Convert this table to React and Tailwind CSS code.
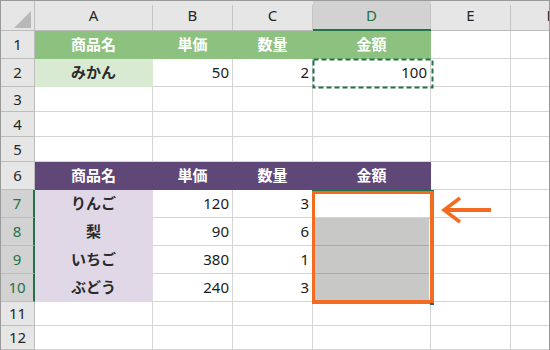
import React from "react";

const EMPTY = "bg-white border-r border-b border-[#d4d4d4]";
const GREEN_HEAD = "bg-[#8cc180] border-r border-b border-[#8cc180] justify-center text-white font-bold text-[15px]";
const PURPLE_HEAD = "bg-[#5f4777] border-r border-b border-[#5f4777] justify-center text-white font-bold text-[15px]";
const LAVENDER = "bg-[#e0d8e6] border-r border-b border-[#e0d8e6] justify-center font-bold text-[15px] text-[#2b2b2b]";
const NUM = "bg-white border-r border-b border-[#d4d4d4] justify-end pr-[3px] text-[15px] text-[#1a1a1a]";
const GRAY = "bg-[#c8c9c6] border-r border-b border-r-[#c8c9c6] border-b-[#a8a8a8]";

const rows = [
  {
    n: "1", h: "h-[28px]",
    cells: [
      [GREEN_HEAD, "商品名"], [GREEN_HEAD, "単価"], [GREEN_HEAD, "数量"], [GREEN_HEAD, "金額"], [EMPTY, ""], [EMPTY, ""],
    ],
  },
  {
    n: "2", h: "h-[28px]",
    cells: [
      ["bg-[#d9ead3] border-r border-b border-[#d9ead3] justify-center font-bold text-[15px] text-[#2b2b2b]", "みかん"],
      [NUM, "50"], [NUM, "2"], [NUM, "100"], [EMPTY, ""], [EMPTY, ""],
    ],
  },
  { n: "3", h: "h-[25px]", cells: [[EMPTY, ""], [EMPTY, ""], [EMPTY, ""], [EMPTY, ""], [EMPTY, ""], [EMPTY, ""]] },
  { n: "4", h: "h-[25px]", cells: [[EMPTY, ""], [EMPTY, ""], [EMPTY, ""], [EMPTY, ""], [EMPTY, ""], [EMPTY, ""]] },
  { n: "5", h: "h-[25px]", cells: [[EMPTY, ""], [EMPTY, ""], [EMPTY, ""], [EMPTY, ""], [EMPTY, ""], [EMPTY, ""]] },
  {
    n: "6", h: "h-[28px]",
    cells: [
      [PURPLE_HEAD, "商品名"], [PURPLE_HEAD, "単価"], [PURPLE_HEAD, "数量"], [PURPLE_HEAD, "金額"], [EMPTY, ""], [EMPTY, ""],
    ],
  },
  {
    n: "7", h: "h-[28px]", sel: true,
    cells: [[LAVENDER, "りんご"], [NUM, "120"], [NUM, "3"], [EMPTY, ""], [EMPTY, ""], [EMPTY, ""]],
  },
  {
    n: "8", h: "h-[28px]", sel: true,
    cells: [[LAVENDER, "梨"], [NUM, "90"], [NUM, "6"], [GRAY, ""], [EMPTY, ""], [EMPTY, ""]],
  },
  {
    n: "9", h: "h-[28px]", sel: true,
    cells: [[LAVENDER, "いちご"], [NUM, "380"], [NUM, "1"], [GRAY, ""], [EMPTY, ""], [EMPTY, ""]],
  },
  {
    n: "10", h: "h-[28px]", sel: true,
    cells: [[LAVENDER, "ぶどう"], [NUM, "240"], [NUM, "3"], [GRAY, ""], [EMPTY, ""], [EMPTY, ""]],
  },
  { n: "11", h: "h-[24px]", cells: [[EMPTY, ""], [EMPTY, ""], [EMPTY, ""], [EMPTY, ""], [EMPTY, ""], [EMPTY, ""]] },
  { n: "12", h: "h-[24px]", cells: [[EMPTY, ""], [EMPTY, ""], [EMPTY, ""], [EMPTY, ""], [EMPTY, ""], [EMPTY, ""]] },
];

const letters = ["A", "B", "C", "D", "E", "F"];

function ColHeader({ label, active }) {
  return (
    <div
      className={
        active
          ? "flex h-full bg-[#d2d2d2] border-b-2 border-[#217346]"
          : "flex h-full bg-[#e6e6e6] border-b border-[#bdbdbd]"
      }
    >
      <div
        className={
          active
            ? "flex-1 flex items-center justify-center text-[15px] text-[#217346]"
            : "flex-1 flex items-center justify-center text-[15px] text-[#262626]"
        }
      >
        {label}
      </div>
      <div className="w-px self-end h-[25px] bg-[#c4c4c4]" />
    </div>
  );
}

function RowHeader({ n, sel }) {
  return (
    <div
      className={
        sel
          ? "flex items-center justify-center bg-[#d2d2d2] border-r-2 border-r-[#217346] border-b border-b-[#bdbdbd] text-[15px] text-[#217346]"
          : "flex items-center justify-center bg-[#e6e6e6] border-r border-b border-[#bdbdbd] text-[15px] text-[#262626]"
      }
    >
      {n}
    </div>
  );
}

export default function App() {
  return (
    <div className="relative w-[550px] h-[350px] overflow-hidden bg-white border-t border-l border-r border-[#9a9a9a] font-['Noto_Sans','Noto_Sans_CJK_JP',sans-serif] leading-none">
      <div className="w-[548px] overflow-hidden">
        <div className="grid w-[590px] grid-cols-[34px_118px_80px_80px_118px_80px_80px]">
          {/* column header strip */}
          <div className="h-[30px] flex bg-[#e6e6e6] border-r border-b border-[#bdbdbd] items-end justify-end pr-[2px] pb-[2px]">
            <svg width="18" height="17" viewBox="0 0 18 17">
              <polygon points="17,0 17,17 0,17" fill="#b8b8b8" />
            </svg>
          </div>
          {letters.map((l) => (
            <div key={l} className="h-[30px]">
              <ColHeader label={l} active={l === "D"} />
            </div>
          ))}

          {rows.map((r) => (
            <React.Fragment key={r.n}>
              <div className={`${r.h} grid`}>
                <RowHeader n={r.n} sel={r.sel} />
              </div>
              {r.cells.map(([cls, txt], i) => (
                <div key={i} className={`${r.h} flex items-center ${cls}`}>
                  {txt}
                </div>
              ))}
            </React.Fragment>
          ))}
        </div>
      </div>

      {/* copy marquee around D2 */}
      <svg className="absolute left-[311px] top-[57px]" width="122" height="31" viewBox="0 0 122 31">
        <rect x="1.5" y="1.5" width="119" height="28" fill="none" stroke="#217346" strokeWidth="2" strokeDasharray="5 3" />
      </svg>

      {/* selection outline over D7:D10 */}
      <div className="absolute left-[311px] top-[189px] w-[122px] h-px bg-[#217346]" />
      <div className="absolute left-[428px] top-[218px] w-px h-[81px] bg-white" />
      <div className="absolute left-[311px] top-[190px] w-[122px] h-[113px] border-l-[3px] border-t-[3px] border-r-4 border-b-4 border-[#f26b21]" />
      <div className="absolute left-[429px] top-[302px] w-[4px] h-[2px] bg-[#217346]" />

      {/* pointer arrow */}
      <svg className="absolute left-[438px] top-[194px]" width="56" height="30" viewBox="0 0 56 30">
        <line x1="5" y1="15" x2="52" y2="15" stroke="#f26b21" strokeWidth="4" />
        <polyline points="21,3 5,15 21,27" fill="none" stroke="#f26b21" strokeWidth="3.5" />
      </svg>
    </div>
  );
}
